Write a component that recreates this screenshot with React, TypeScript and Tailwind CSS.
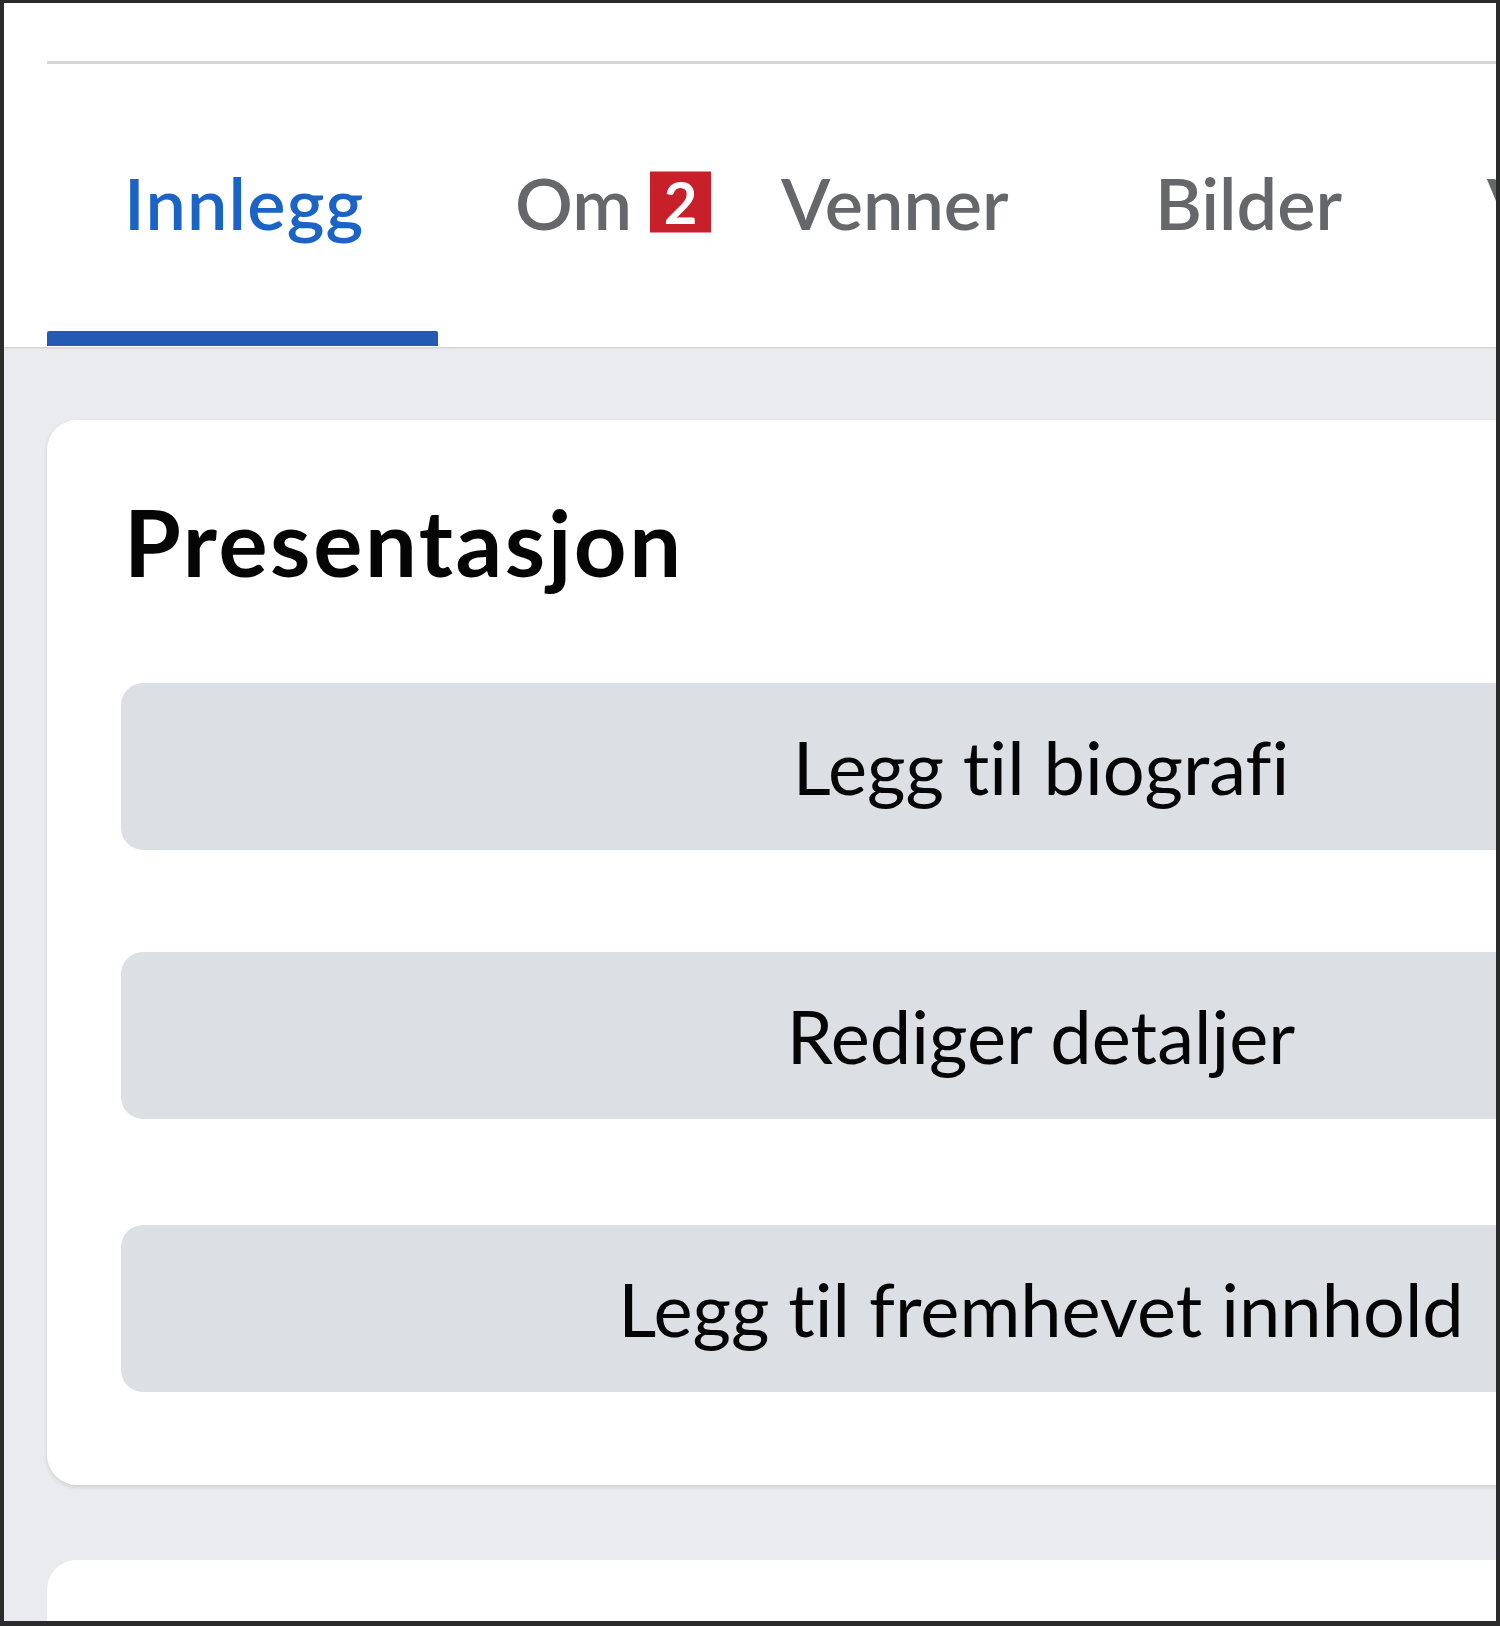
import React from "react";

const font = { fontFamily: "Lato, 'Noto Sans', sans-serif" };

function Tab({
  label,
  active,
  badge,
  width,
  track,
}: {
  label: string;
  active?: boolean;
  badge?: string;
  width: string;
  track?: string;
}) {
  return (
    <div className={"flex flex-col shrink-0 h-full " + width}>
      <div className="flex-1 flex items-center pl-[77px] pt-[8px]">
        <div className="relative">
          <span
            className={
              "text-[72px] font-semibold leading-none whitespace-nowrap " +
              (track ?? "") +
              " " +
              (active ? "text-[#1b63c4]" : "text-[#65676b]")
            }
          >
            {label}
          </span>
          {badge && (
            <span className="absolute left-[calc(100%+18px)] top-1/2 -translate-y-1/2 w-[61px] h-[61px] bg-[#c8202b] text-white text-[58px] font-bold flex items-center justify-center leading-none">
              {badge}
            </span>
          )}
        </div>
      </div>
      <div className={"h-[15px] mb-[1px] rounded-t-[2px] " + (active ? "bg-[#2459b4]" : "bg-transparent")} />
    </div>
  );
}

function ActionButton({ label, className }: { label: string; className?: string }) {
  return (
    <div className={"h-[167px] rounded-[22px] bg-[#dcdfe3] flex items-center justify-center " + (className ?? "")}>
      <span className="text-[74px] text-[#050505] leading-none whitespace-nowrap [font-variant-ligatures:none]">
        {label}
      </span>
    </div>
  );
}

export default function App() {
  return (
    <div
      className="w-[1500px] h-[1626px] overflow-hidden border-l-[4px] border-t-[3px] border-b-[5px] border-r-[4px] border-[#2b2b2b] bg-[#e9ebee]"
      style={font}
    >
      <div className="w-[2200px]">
        <div className="bg-white pl-[43px] pt-[58px] h-[344px] flex flex-col shadow-[0_1px_2px_rgba(0,0,0,0.12)]">
          <div className="h-[3px] bg-[#d3d6da]" />
          <div className="flex-1 flex">
            <Tab label="Innlegg" active width="w-[391px]" track="tracking-[1.2px]" />
            <Tab label="Om" badge="2" width="w-[266px]" />
            <Tab label="Venner" width="w-[374px]" />
            <Tab label="Bilder" width="w-[332px]" />
            <Tab label="Videoer" width="w-[420px]" />
          </div>
        </div>
        <div className="pl-[43px] pt-[73px] flex flex-col gap-[75px]">
          <div className="w-[1988px] bg-white rounded-[30px] shadow-[0_2px_4px_rgba(0,0,0,0.12)] px-[74px] pt-[76px] pb-[93px]">
            <h2 className="text-[92px] font-bold text-[#050505] leading-none pl-[3px] h-[120px] tracking-[2.6px] [font-variant-ligatures:none]">
              Presentasjon
            </h2>
            <div className="flex flex-col mt-[67px]">
              <ActionButton label="Legg til biografi" />
              <ActionButton label="Rediger detaljer" className="mt-[102px]" />
              <ActionButton label="Legg til fremhevet innhold" className="mt-[106px]" />
            </div>
          </div>
          <div className="w-[1988px] h-[300px] bg-white rounded-[30px]" />
        </div>
      </div>
    </div>
  );
}
